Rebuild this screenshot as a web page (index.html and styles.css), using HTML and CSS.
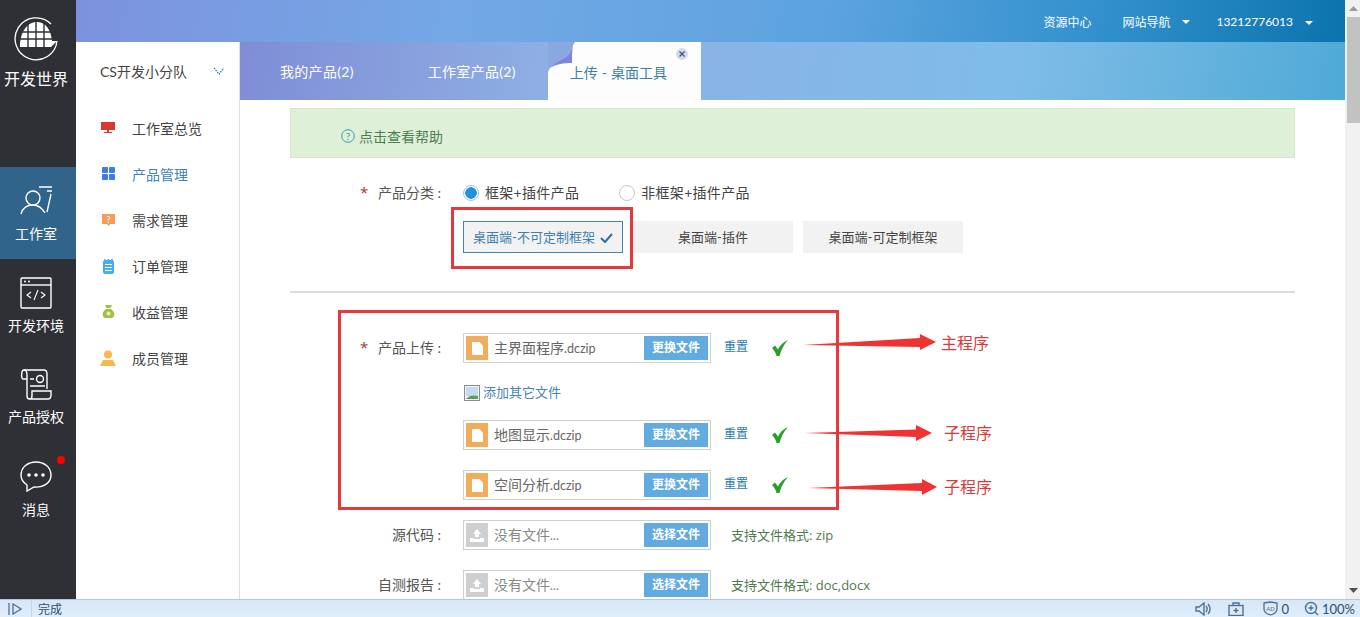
FILE: index.html
```html
<!DOCTYPE html>
<html lang="en">
<head>
    <meta charset="UTF-8">
    <meta name="viewport" content="width=device-width, initial-scale=1.0">
    <title>开发世界</title>
    <link rel="stylesheet" href="styles.css">
</head>
<body>
    <div class="shell">
        <!-- left rail -->
        <div class="rail">
            <div class="logo">
                <svg width="46" height="44" viewBox="0 0 46 44">
                    <path d="M38 7A21 21 0 1 0 44 24" fill="none" stroke="#fff" stroke-width="1.3"/>
                    <path d="M7 30C7 15 14 5 24 5C32 5 38 12 39 24L44 24L38 30Z" fill="#fff"/>
                    <path d="M15 7V30M23 4V30M31 6V30M7 15H40M6 22H40" stroke="#2e3036" stroke-width="1.4"/>
                </svg>
                <span>开发世界</span>
            </div>
            <div class="rail-item active">
                <svg width="34" height="32" viewBox="0 0 34 32" fill="none" stroke="#fff" stroke-width="1.4">
                    <circle cx="14" cy="13" r="7"/>
                    <path d="M2 29C4 22 9 20 14 20C19 20 23 23 26 28"/>
                    <path d="M20 2H33M28 6H33M32 9L28 27"/>
                </svg>
                <span>工作室</span>
            </div>
            <div class="rail-item">
                <svg width="32" height="32" viewBox="0 0 32 32" fill="none" stroke="#fff" stroke-width="1.4">
                    <rect x="1" y="1" width="30" height="30" rx="1"/>
                    <path d="M1 8H31"/>
                    <circle cx="5" cy="4.500" r="1" fill="#fff" stroke="none"/>
                    <circle cx="9" cy="4.500" r="1" fill="#fff" stroke="none"/>
                    <path d="M11 15L7 18L11 21M21 15L25 18L21 21M18 13L14 23" stroke-width="1.1"/>
                </svg>
                <span>开发环境</span>
            </div>
            <div class="rail-item">
                <svg width="32" height="31" viewBox="0 0 32 31" fill="none" stroke="#fff" stroke-width="1.4">
                    <path d="M7 10H3C1 10 1 1 4 1H24C26 1 27 3 27 5V20"/>
                    <path d="M4 1C7 1 7 4 7 6V27C7 31 12 31 12 27V22H31V26C31 28 30 30 28 30H9"/>
                    <circle cx="20" cy="10" r="3.500"/>
                    <path d="M10 10H14M10 17H25"/>
                </svg>
                <span>产品授权</span>
            </div>
            <div class="rail-item">
                <svg width="32" height="32" viewBox="0 0 32 32" fill="none" stroke="#fff" stroke-width="1.4">
                    <path d="M16 1C8 1 1 6 1 14C1 19 4 22 7 24L7 30L14 26C23 27 31 22 31 14C31 6 24 1 16 1Z"/>
                    <circle cx="9" cy="14" r="1.800" fill="#fff" stroke="none"/>
                    <circle cx="16" cy="14" r="1.800" fill="#fff" stroke="none"/>
                    <circle cx="23" cy="14" r="1.800" fill="#fff" stroke="none"/>
                </svg>
                <span>消息</span>
                <i class="badge"></i>
            </div>
        </div>

        <div class="page">
            <div class="topbar">
                <a>资源中心</a>
                <a class="has-caret">网站导航</a>
                <a class="has-caret phone">13212776013</a>
            </div>
            <div class="body">
                <!-- sidebar -->
                <div class="sidebar">
                    <div class="team">
                        <span>CS开发小分队</span>
                        <svg width="10" height="8" viewBox="0 0 10 8" fill="none" stroke="#2f7f9f" stroke-width="1.300" stroke-dasharray="1.500 1">
                            <path d="M0 1L5 7L10 1"/>
                        </svg>
                    </div>
                    <div class="nav-item">
                        <svg width="16" height="14" viewBox="0 0 16 14"><path d="M1 1H15V9H9V11H12V12H4V11H7V9H1Z" fill="#d8392e"/></svg>
                        <span>工作室总览</span>
                    </div>
                    <div class="nav-item current">
                        <svg width="16" height="14" viewBox="0 0 16 14" fill="#3b7de0"><rect x="2" y="0" width="6" height="6" rx="1"/><rect x="9" y="0" width="6" height="6" rx="1"/><rect x="2" y="7" width="6" height="6" rx="1"/><rect x="9" y="7" width="6" height="6" rx="1"/></svg>
                        <span>产品管理</span>
                    </div>
                    <div class="nav-item">
                        <svg width="16" height="14" viewBox="0 0 16 14"><path d="M2 1H15V11H10L8.500 13L7 11H2Z" fill="#f79a5a"/><text x="8.500" y="9.500" class="glyph">?</text></svg>
                        <span>需求管理</span>
                    </div>
                    <div class="nav-item">
                        <svg width="16" height="16" viewBox="0 0 16 16"><rect x="3" y="2" width="11" height="14" rx="2" fill="#45aef2"/><path d="M5 1V3M8.500 1V3M12 1V3" stroke="#45aef2" stroke-width="1.500"/><path d="M5 6.500H12M5 9.500H12M5 12.500H12" stroke="#fff"/></svg>
                        <span>订单管理</span>
                    </div>
                    <div class="nav-item">
                        <svg width="16" height="15" viewBox="0 0 16 15"><path d="M5 1H12L10.500 4H6.500Z" fill="#a5bf45"/><path d="M6 5H11C14 7 15 10 14 12C13.500 14 12 14 8.500 14C5 14 3.500 14 3 12C2 10 3 7 6 5Z" fill="#a5bf45"/><circle cx="8.500" cy="9.500" r="2" fill="#e8efcf"/></svg>
                        <span>收益管理</span>
                    </div>
                    <div class="nav-item">
                        <svg width="16" height="16" viewBox="0 0 16 16" fill="#f6b94a"><circle cx="8" cy="4.500" r="4"/><path d="M0 16L3 10H13L16 16Z"/></svg>
                        <span>成员管理</span>
                    </div>
                </div>

                <div class="workspace">
                    <div class="tabs">
                        <div class="tab">我的产品(2)</div>
                        <div class="tab">工作室产品(2)</div>
                        <div class="tab open">
                            <svg class="curl" width="28" height="30" viewBox="0 0 28 30">
                                <path d="M0 0H27L25 3C23 8 22 11 20 13C14 18 6 20 2 26L0 30Z" fill="#8aa8e0"/>
                                <path d="M2 26C6 20 14 18 20 13C22 11 23 8 25 3C24 9 24 15 24 21C16 21 8 22 2 26Z" fill="#7b86dc"/>
                            </svg>
                            <span>上传 - 桌面工具</span>
                            <svg class="tab-close" width="12" height="12" viewBox="0 0 12 12">
                                <circle cx="6" cy="6" r="6" fill="#d5dbee"/>
                                <path d="M3.500 3.500L8.500 8.500M8.500 3.500L3.500 8.500" stroke="#3e5a78" stroke-width="1.300"/>
                            </svg>
                        </div>
                    </div>

                    <div class="content">
                        <div class="help">
                            <svg width="14" height="14" viewBox="0 0 14 14" fill="none"><circle cx="7" cy="7" r="6.300" stroke="#3a9aa8"/><text x="7" y="10.500" class="glyph help-mark">?</text></svg>
                            <span>点击查看帮助</span>
                        </div>

                        <div class="row category">
                            <label class="field-label"><b>*</b>产品分类 :</label>
                            <span class="radio checked"></span><span class="radio-text">框架+插件产品</span>
                            <span class="radio second"></span><span class="radio-text">非框架+插件产品</span>
                        </div>
                        <div class="types">
                            <div class="type selected"><span>桌面端-不可定制框架</span>
                                <svg width="13" height="10" viewBox="0 0 13 10" fill="none" stroke="#2f6f9f" stroke-width="2"><path d="M1 5L5 9L12 1"/></svg>
                            </div>
                            <div class="type"><span>桌面端-插件</span></div>
                            <div class="type"><span>桌面端-可定制框架</span></div>
                        </div>

                        <hr class="divider">

                        <div class="row upload">
                            <label class="field-label"><b>*</b>产品上传 :</label>
                            <div class="file">
                                <span class="file-icon done"><svg width="11" height="13" viewBox="0 0 12 14"><path d="M0 0H8L12 4V14H0Z" fill="#fff"/></svg></span>
                                <span class="file-name">主界面程序<span class="ext">.dczip</span></span>
                                <span class="file-btn">更换文件</span>
                            </div>
                            <a class="reset">重置</a>
                            <svg class="ok" width="18" height="18" viewBox="0 0 18 18"><path d="M1 9L4 6.500L7 10.500C9 6.500 12 3 17 1C13 5 10.500 10 8.500 17H5.500C5 14 3 11 1 9Z" fill="#2aa02a"/></svg>
                        </div>
                        <div class="add-file">
                            <svg width="16" height="16" viewBox="0 0 16 16"><rect x="0.500" y="0.500" width="15" height="15" fill="#f2f4f7" stroke="#8a8f96"/><rect x="2" y="2" width="12" height="9" fill="#c5dcef"/><path d="M2 14C5 10 10 10 14 11V14Z" fill="#5f9e55"/></svg>
                            <span>添加其它文件</span>
                        </div>
                        <div class="row upload">
                            <label class="field-label"></label>
                            <div class="file">
                                <span class="file-icon done"><svg width="11" height="13" viewBox="0 0 12 14"><path d="M0 0H8L12 4V14H0Z" fill="#fff"/></svg></span>
                                <span class="file-name">地图显示<span class="ext">.dczip</span></span>
                                <span class="file-btn">更换文件</span>
                            </div>
                            <a class="reset">重置</a>
                            <svg class="ok" width="18" height="18" viewBox="0 0 18 18"><path d="M1 9L4 6.500L7 10.500C9 6.500 12 3 17 1C13 5 10.500 10 8.500 17H5.500C5 14 3 11 1 9Z" fill="#2aa02a"/></svg>
                        </div>
                        <div class="row upload">
                            <label class="field-label"></label>
                            <div class="file">
                                <span class="file-icon done"><svg width="11" height="13" viewBox="0 0 12 14"><path d="M0 0H8L12 4V14H0Z" fill="#fff"/></svg></span>
                                <span class="file-name">空间分析<span class="ext">.dczip</span></span>
                                <span class="file-btn">更换文件</span>
                            </div>
                            <a class="reset">重置</a>
                            <svg class="ok" width="18" height="18" viewBox="0 0 18 18"><path d="M1 9L4 6.500L7 10.500C9 6.500 12 3 17 1C13 5 10.500 10 8.500 17H5.500C5 14 3 11 1 9Z" fill="#2aa02a"/></svg>
                        </div>
                        <div class="row upload">
                            <label class="field-label">源代码 :</label>
                            <div class="file">
                                <span class="file-icon"><svg width="14" height="14" viewBox="0 0 14 14" fill="#fff"><path d="M7 1L11 6H9V9H5V6H3Z"/><path d="M0 10H4V11H10V10H14V14H0Z"/></svg></span>
                                <span class="file-name empty">没有文件<span class="ext">...</span></span>
                                <span class="file-btn">选择文件</span>
                            </div>
                            <span class="formats">支持文件格式: zip</span>
                        </div>
                        <div class="row upload">
                            <label class="field-label">自测报告 :</label>
                            <div class="file">
                                <span class="file-icon"><svg width="14" height="14" viewBox="0 0 14 14" fill="#fff"><path d="M7 1L11 6H9V9H5V6H3Z"/><path d="M0 10H4V11H10V10H14V14H0Z"/></svg></span>
                                <span class="file-name empty">没有文件<span class="ext">...</span></span>
                                <span class="file-btn">选择文件</span>
                            </div>
                            <span class="formats">支持文件格式: doc,docx</span>
                        </div>
                    </div>
                </div>
            </div>
        </div>

        <div class="scrollbar">
            <svg class="arrow-up" width="9" height="5" viewBox="0 0 9 5"><path d="M4.500 0L9 5H0Z" fill="#9a9a9a"/></svg>
            <div class="thumb"></div>
            <svg class="arrow-down" width="9" height="5" viewBox="0 0 9 5"><path d="M0 0H9L4.500 5Z" fill="#505050"/></svg>
        </div>
    </div>

    <div class="statusbar">
        <div class="status-toggle">
            <svg width="14" height="12" viewBox="0 0 14 12" fill="none" stroke="#4f7191" stroke-width="1.300"><path d="M1 0V12M5 1L13 6L5 11Z"/></svg>
        </div>
        <span class="status-text">完成</span>
        <div class="status-tools">
            <svg width="16" height="14" viewBox="0 0 16 14" fill="none" stroke="#4f7191" stroke-width="1.400"><path d="M1 5H4L9 1V13L4 9H1Z"/><path d="M11 4C12.500 6 12.500 8 11 10M13 2C15.500 5 15.500 9 13 12"/></svg>
            <svg class="tool-case" width="16" height="14" viewBox="0 0 16 14" fill="none" stroke="#4f7191" stroke-width="1.400"><rect x="1" y="3.500" width="14" height="10"/><path d="M5 3.500V1H11V3.500M8 6V11M5.500 8.500H10.500"/></svg>
            <svg class="tool-shield" width="15" height="15" viewBox="0 0 15 15" fill="none" stroke="#4f7191" stroke-width="1.300"><path d="M1 2L7.500 1L14 2V8C14 11 11 13 7.500 14C4 13 1 11 1 8Z"/><text x="7.500" y="9.500" class="shield-mark">AD</text></svg>
            <span class="tool-count">0</span>
            <svg class="tool-zoom" width="15" height="15" viewBox="0 0 15 15" fill="none" stroke="#4f7191" stroke-width="1.400"><circle cx="7" cy="7" r="5.500"/><path d="M4.500 7H9.500M7 4.500V9.500M11 11L14 14"/></svg>
            <span class="tool-percent">100%</span>
        </div>
    </div>

    <!-- red markup drawn over the screenshot -->
    <div class="markup box-type"></div>
    <div class="markup box-files"></div>
    <svg class="markup-arrows" width="1360" height="617" viewBox="0 0 1360 617" fill="#ee3333">
        <path d="M803 345L920 338V334L936 342L920 350V347Z"/>
        <path d="M805 433L916 429.500V425L932 433L916 441V437Z"/>
        <path d="M808 488L922 483V479L937 487L922 495V491Z"/>
    </svg>
    <span class="note note-main">主程序</span>
    <span class="note note-sub1">子程序</span>
    <span class="note note-sub2">子程序</span>
</body>
</html>
```

FILE: styles.css
```css
* {
    box-sizing: border-box;
}
html, body {
    margin: 0;
    padding: 0;
    height: 617px;
    overflow: hidden;
}
body {
    position: relative;
    font-family: Lato, "Noto Sans CJK SC", sans-serif;
    font-size: 14px;
    color: #555;
    background: #fff;
}
.shell {
    display: flex;
    height: 599px;
}

/* rail */
.rail {
    width: 76px;
    flex: none;
    padding-right: 4px;
    background-color: #2e3036;
    color: #fff;
}
.logo {
    height: 167px;
    padding-top: 17px;
    display: flex;
    flex-direction: column;
    align-items: center;
    font-size: 16px;
    line-height: 24px;
}
.logo span {
    margin-top: 6px;
    white-space: nowrap;
}
.rail-item {
    position: relative;
    height: 92px;
    width: 76px;
    padding: 18px 4px 0 0;
    display: flex;
    flex-direction: column;
    align-items: center;
    line-height: 20px;
}
.rail-item span {
    margin-top: 7px;
}
.rail-item.active {
    background-color: #30648a;
}
.badge {
    position: absolute;
    left: 57px;
    top: 13px;
    width: 8px;
    height: 8px;
    border-radius: 50%;
    background-color: #f00;
}

/* top */
.page {
    flex: 1;
    min-width: 0;
    display: flex;
    flex-direction: column;
}
.topbar {
    height: 42px;
    flex: none;
    display: flex;
    justify-content: flex-end;
    align-items: center;
    padding-right: 52px;
    color: #fff;
    font-size: 12px;
    background: linear-gradient(100deg, #7d92de 0%, #74a8e6 30%, #5ba3df 60%, #2f8fcb 82%, #0c73ad 100%);
}
.topbar a {
    margin-left: 31px;
}
.topbar .has-caret {
    position: relative;
}
.topbar .has-caret::after {
    content: "";
    position: absolute;
    top: 7px;
    right: -20px;
    border-top: 4px solid #fff;
    border-left: 4px solid transparent;
    border-right: 4px solid transparent;
}
.topbar .phone {
    margin-left: 46px;
}
.body {
    flex: 1;
    min-height: 0;
    display: flex;
}

/* sidebar */
.sidebar {
    width: 164px;
    flex: none;
    border-right: 1px solid #dcdfe6;
    background: #fff;
}
.team {
    height: 58px;
    padding: 0 15px 0 24px;
    display: flex;
    justify-content: space-between;
    align-items: center;
    color: #444;
}
.nav-item {
    height: 46px;
    padding-left: 24px;
    display: flex;
    align-items: center;
    color: #444;
}
.nav-item svg {
    width: 16px;
    margin-right: 16px;
    margin-bottom: 1px;
}
.nav-item:nth-child(2) {
    margin-top: 5px;
}
.nav-item.current {
    color: #3f83b8;
}
.glyph {
    fill: #fff;
    font-size: 10px;
    text-anchor: middle;
}
.help-mark {
    fill: #3a9aa8;
}

/* tabs */
.workspace {
    flex: 1;
    min-width: 0;
    display: flex;
    flex-direction: column;
}
.tabs {
    height: 58px;
    flex: none;
    display: flex;
    padding-left: 40px;
    color: #fff;
    background: linear-gradient(100deg, #7f8dd6 0%, #8eafe4 28%, #7fbde8 70%, #4faad6 100%);
}
.tab {
    margin-right: 74px;
    line-height: 60px;
    letter-spacing: 0.3px;
}
.tab.open {
    position: relative;
    width: 153px;
    margin-left: -42px;
    padding-left: 22px;
    background-color: #fdfdfe;
    color: #3c7fa8;
    line-height: 62px;
    letter-spacing: 0;
    word-spacing: 0.5px;
}
.curl {
    position: absolute;
    left: 0;
    top: 0;
}
.tab.open span {
    position: relative;
}
.tab-close {
    position: absolute;
    right: 13px;
    top: 6px;
}

/* form */
.content {
    flex: 1;
    min-height: 0;
    overflow: hidden;
    padding: 8px 50px 0;
}
.help {
    height: 50px;
    padding: 6px 0 0 50px;
    display: flex;
    align-items: center;
    gap: 4px;
    background-color: #dff0d8;
    border: 1px solid #d6e9c6;
    color: #4b7f52;
}
.row {
    display: flex;
    align-items: center;
}
.field-label {
    width: 155px;
    flex: none;
    padding-right: 4px;
    margin-top: -2px;
    text-align: right;
    color: #555;
}
.field-label b {
    float: left;
    margin-left: 70px;
    font-family: "Open Sans", sans-serif;
    font-size: 15px;
    font-weight: normal;
    color: #a33;
}
.category {
    margin-top: 24px;
    height: 22px;
}
.radio {
    width: 16px;
    height: 16px;
    margin: 0 6px 0 18px;
    border: 1px solid #c8c8c8;
    border-radius: 50%;
    background: #fff;
}
.radio.checked {
    background: radial-gradient(circle, #1f94dc 0 5.500px, #fff 6px);
    border-color: #9cc8e6;
}
.radio.second {
    margin-left: 40px;
}
.radio-text {
    margin-top: -2px;
    letter-spacing: 0.3px;
    color: #444;
}
.types {
    margin: 17px 0 0 173px;
    display: flex;
    gap: 10px;
}
.type {
    width: 160px;
    height: 32px;
    display: flex;
    align-items: center;
    justify-content: center;
    gap: 5px;
    background-color: #f2f2f2;
    font-size: 13px;
    color: #444;
}
.type span {
    margin-top: -2px;
}
.type svg {
    margin-top: 2px;
}
.type.selected {
    border: 1px solid #3f86b4;
    color: #3f7fae;
}
.divider {
    height: 2px;
    margin: 38px 0 40px;
    border: none;
    background-color: #dcdcdc;
}
.upload {
    height: 30px;
    margin-bottom: 20px;
}
.file {
    width: 248px;
    height: 30px;
    margin-left: 18px;
    padding: 2px;
    display: flex;
    align-items: center;
    border: 1px solid #d0d0d0;
    background: #fff;
}
.file-icon {
    width: 22px;
    height: 24px;
    flex: none;
    display: flex;
    align-items: center;
    justify-content: center;
    background-color: #cfcfcf;
}
.file-icon.done {
    background-color: #f0ad5b;
}
.file-name {
    flex: 1;
    margin-top: -2px;
    padding-left: 6px;
    color: #666;
}
.file-name.empty {
    color: #888;
}
.ext {
    font-size: 12.500px;
}
.file-btn {
    width: 64px;
    height: 24px;
    flex: none;
    text-align: center;
    line-height: 24px;
    font-size: 12px;
    font-weight: bold;
    color: #fff;
    background-color: #62abe0;
}
.reset {
    margin-left: 13px;
    margin-bottom: 5px;
    font-size: 12px;
    color: #2a7ba8;
}
.ok {
    margin-left: 23px;
}
.add-file {
    height: 57px;
    margin: -20px 0 0 173px;
    display: flex;
    align-items: center;
    gap: 3px;
    font-size: 13px;
    color: #4a85b0;
}
.add-file svg {
    margin: 2px 0 0 1px;
}
.formats {
    margin-left: 20px;
    margin-top: -1px;
    font-family: "Open Sans", "Noto Sans CJK SC", sans-serif;
    font-size: 13px;
    color: #4f7a4f;
}

/* scrollbar */
.scrollbar {
    position: relative;
    width: 15px;
    flex: none;
    background-color: #f1f1f1;
}
.thumb {
    position: absolute;
    left: 2px;
    right: 0;
    top: 17px;
    height: 106px;
    background-color: #c2c2c2;
}
.arrow-up {
    position: absolute;
    left: 4px;
    top: 6px;
}
.arrow-down {
    position: absolute;
    left: 4px;
    bottom: 6px;
}

/* status */
.statusbar {
    height: 18px;
    display: flex;
    align-items: center;
    border-top: 1px solid #b4c6d8;
    background: linear-gradient(#d6e7f8, #e0edfa);
    font-size: 12px;
    color: #2f4f6f;
}
.status-toggle {
    width: 32px;
    height: 17px;
    padding-left: 8px;
    display: flex;
    align-items: center;
    border-right: 1px solid #c6d6e6;
}
.status-text {
    margin-left: 6px;
}
.status-tools {
    margin-left: auto;
    padding-right: 5px;
    display: flex;
    align-items: center;
    font-size: 13px;
}
.shield-mark {
    fill: #4f7191;
    stroke: none;
    font-size: 6px;
    text-anchor: middle;
}
.tool-case {
    margin-left: 17px;
}
.tool-shield {
    margin-left: 19px;
}
.tool-count {
    margin-left: 3px;
}
.tool-zoom {
    margin-left: 15px;
}
.tool-percent {
    margin-left: 3px;
}

/* markup layer */
.markup {
    position: absolute;
    border: 3px solid #e5383f;
}
.box-type {
    left: 451px;
    top: 207px;
    width: 182px;
    height: 62px;
}
.box-files {
    left: 338px;
    top: 310px;
    width: 501px;
    height: 200px;
}
.markup-arrows {
    position: absolute;
    left: 0;
    top: 0;
}
.note {
    position: absolute;
    font-size: 16px;
    line-height: 22px;
    color: #d83a3a;
}
.note-main {
    left: 941px;
    top: 332px;
}
.note-sub1 {
    left: 944px;
    top: 422px;
}
.note-sub2 {
    left: 944px;
    top: 476px;
}
```
